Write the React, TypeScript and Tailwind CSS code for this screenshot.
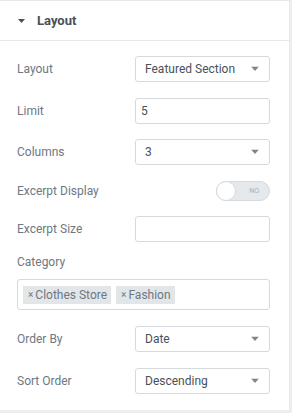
import React from "react";

function Caret() {
  return (
    <svg width="8" height="5" viewBox="0 0 8 5" className="absolute right-[10px] top-1/2 -translate-y-1/2">
      <path d="M0 0 L8 0 L4 4.5 Z" fill="#7d858c" />
    </svg>
  );
}

function Select({ value }: { value: string }) {
  return (
    <div className="relative flex h-[26px] w-[135px] items-center rounded-[3px] border border-[#d5dadf] bg-white pl-[9px] text-[12px] text-[#495157]">
      {value}
      <Caret />
    </div>
  );
}

function TextInput({ value }: { value?: string }) {
  return (
    <div className="flex h-[26px] w-[135px] items-center rounded-[3px] border border-[#d5dadf] bg-white pl-[5px] text-[12px] text-[#495157]">
      {value}
    </div>
  );
}

function Row({ label, className, children }: { label: string; className: string; children: React.ReactNode }) {
  return (
    <div className={"flex items-center justify-between " + className}>
      <span className="text-[12px] text-[#6d7882]">{label}</span>
      {children}
    </div>
  );
}

function Tag({ label }: { label: string }) {
  return (
    <span className="flex h-[18px] items-center bg-[#e3e6e9] pl-[5px] pr-[4px] text-[12px] text-[#6d7882]">
      <span className="mr-[2px] text-[10px]">×</span>
      {label}
    </span>
  );
}

export default function App() {
  return (
    <div className="flex h-[413px] w-[292px] bg-[#eceef0]" style={{ fontFamily: "Roboto, 'Liberation Sans', sans-serif" }}>
      <div className="flex h-[410px] w-[290px] flex-col border-r border-t border-[#e6e9ec] bg-white">
        <div className="flex h-[40px] items-center border-b border-[#e6e9ec] pl-[18px]">
          <svg width="7" height="4" viewBox="0 0 7 4">
            <path d="M0 0 L7 0 L3.5 4 Z" fill="#495157" />
          </svg>
          <span className="ml-[12px] text-[13px] font-bold text-[#495157]">Layout</span>
        </div>
        <div className="flex flex-col pl-[17px] pr-[19px]">
          <Row label="Layout" className="mt-[15px]">
            <Select value="Featured Section" />
          </Row>
          <Row label="Limit" className="mt-[16px]">
            <TextInput value="5" />
          </Row>
          <Row label="Columns" className="mt-[15px]">
            <Select value="3" />
          </Row>
          <Row label="Excerpt Display" className="mt-[16px] h-[20px]">
            <div className="relative flex h-[20px] w-[54px] items-center justify-end rounded-full border border-[#d5dadf] bg-[#e6e9ec] pr-[10px]">
              <span className="text-[7px] text-[#a4afb7]">NO</span>
              <span className="absolute left-[-1px] top-[-1px] h-[20px] w-[20px] rounded-full border border-[#d5dadf] bg-white" />
            </div>
          </Row>
          <Row label="Excerpt Size" className="mt-[15px]">
            <TextInput />
          </Row>
          <div className="mt-[13px] flex h-[14px] items-center text-[12px] text-[#6d7882]">Category</div>
          <div className="mt-[10px] flex h-[31px] items-center gap-[5px] rounded-[3px] border border-[#d5dadf] pl-[5px]">
            <Tag label="Clothes Store" />
            <Tag label="Fashion" />
          </div>
          <Row label="Order By" className="mt-[16px]">
            <Select value="Date" />
          </Row>
          <Row label="Sort Order" className="mt-[16px]">
            <Select value="Descending" />
          </Row>
        </div>
      </div>
    </div>
  );
}
